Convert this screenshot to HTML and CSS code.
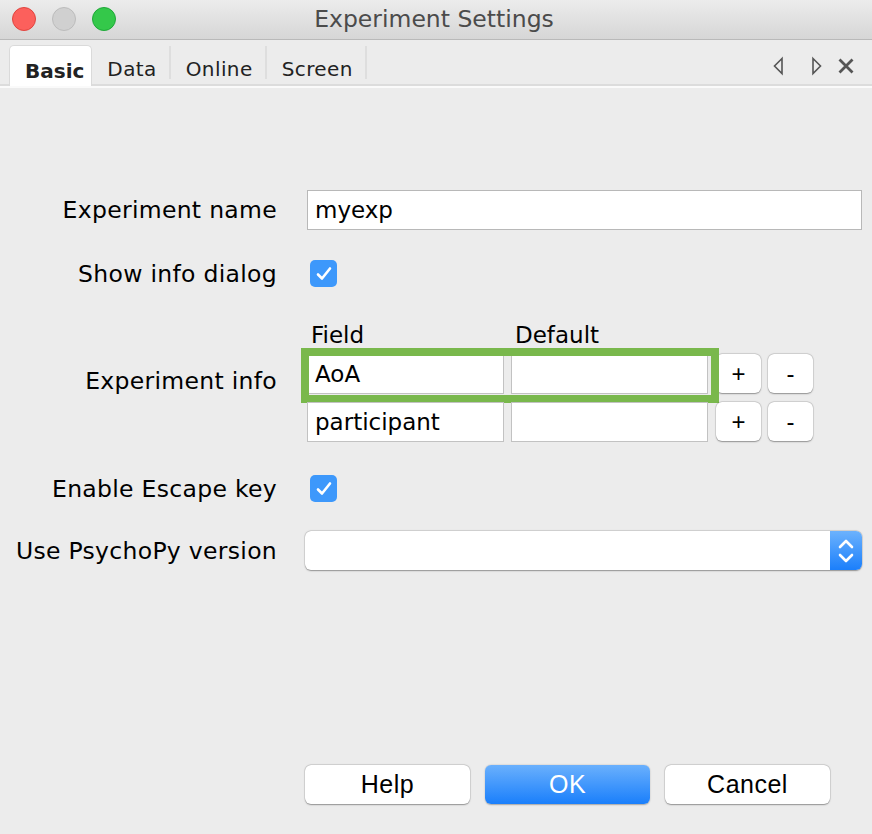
FILE: index.html
```html
<!DOCTYPE html>
<html>
<head>
<meta charset="utf-8">
<link rel="stylesheet" href="styles.css">
</head>
<body>
<div class="window">
  <div class="titlebar">
    <div class="lights">
      <span class="light red"></span>
      <span class="light grey"></span>
      <span class="light green"></span>
    </div>
    <div class="title">Experiment Settings</div>
  </div>
  <div class="tabstrip">
    <div class="tabs">
      <div class="tab active">Basic</div>
      <div class="tab">Data</div>
      <div class="sep"></div>
      <div class="tab">Online</div>
      <div class="sep"></div>
      <div class="tab">Screen</div>
      <div class="sep"></div>
    </div>
    <div class="tabnav">
      <svg class="navicon" width="14" height="20" viewBox="0 0 14 20"><path d="M11 2.5 L3.5 10 L11 17.5 Z" fill="none" stroke="#555" stroke-width="1.6" stroke-linejoin="miter"/></svg>
      <svg class="navicon next" width="14" height="20" viewBox="0 0 14 20"><path d="M3 2.5 L10.5 10 L3 17.5 Z" fill="none" stroke="#555" stroke-width="1.6" stroke-linejoin="miter"/></svg>
      <svg class="navicon close" width="18" height="20" viewBox="0 0 18 20"><path d="M2.5 3.5 L15.5 16.5 M15.5 3.5 L2.5 16.5" stroke="#555" stroke-width="2.8"/></svg>
    </div>
  </div>
  <div class="tabline"></div>

  <div class="form">
    <div class="row row-name">
      <div class="label">Experiment name</div>
      <div class="control"><div class="textfield wide">myexp</div></div>
    </div>
    <div class="row row-showinfo">
      <div class="label">Show info dialog</div>
      <div class="control"><span class="checkbox"><svg width="18" height="16" viewBox="0 0 18 16"><path d="M3 8.5 L7 12.5 L15 2.5" fill="none" stroke="#fff" stroke-width="2.6" stroke-linecap="round" stroke-linejoin="round"/></svg></span></div>
    </div>
    <div class="row row-heads">
      <div class="label"></div>
      <div class="control heads">
        <div class="head">Field</div>
        <div class="head">Default</div>
      </div>
    </div>
    <div class="row row-info">
      <div class="label">Experiment info</div>
      <div class="control info">
        <div class="inforow">
          <div class="cell">AoA</div>
          <div class="cell"></div>
          <div class="btn small">+</div>
          <div class="btn small">-</div>
          <div class="highlight"></div>
        </div>
        <div class="inforow">
          <div class="cell">participant</div>
          <div class="cell"></div>
          <div class="btn small">+</div>
          <div class="btn small">-</div>
        </div>
      </div>
    </div>
    <div class="row row-escape">
      <div class="label">Enable Escape key</div>
      <div class="control"><span class="checkbox"><svg width="18" height="16" viewBox="0 0 18 16"><path d="M3 8.5 L7 12.5 L15 2.5" fill="none" stroke="#fff" stroke-width="2.6" stroke-linecap="round" stroke-linejoin="round"/></svg></span></div>
    </div>
    <div class="row row-version">
      <div class="label">Use PsychoPy version</div>
      <div class="control">
        <div class="select">
          <div class="selval"></div>
          <div class="selarrow"><svg width="20" height="30" viewBox="0 0 20 30"><path d="M4 11 L10 5 L16 11 M4 19 L10 25 L16 19" fill="none" stroke="#fff" stroke-width="2.6" stroke-linecap="round" stroke-linejoin="round"/></svg></div>
        </div>
      </div>
    </div>
  </div>

  <div class="buttons">
    <div class="btn big">Help</div>
    <div class="btn big primary">OK</div>
    <div class="btn big">Cancel</div>
  </div>
</div>
</body>
</html>
```

FILE: styles.css
```css
* { box-sizing: border-box; }
html, body { margin: 0; padding: 0; }
body {
  width: 872px;
  height: 834px;
  background: #ececec;
  font-family: "DejaVu Sans", "Liberation Sans", sans-serif;
  color: #000;
  overflow: hidden;
}
.window { width: 872px; height: 834px; display: flex; flex-direction: column; }

.titlebar {
  height: 40px;
  flex: none;
  background: linear-gradient(#ececec, #d6d6d6);
  border-bottom: 1px solid #b9b9b9;
  position: relative;
  display: flex;
  align-items: center;
}
.lights { display: flex; gap: 16px; padding-left: 12px; margin-top: -2px; }
.light { width: 24px; height: 24px; border-radius: 50%; display: block; }
.red { background: #fc605c; border: 1px solid #e0443e; }
.grey { background: #d0d0d0; border: 1px solid #bcbcbc; }
.green { background: #34c84a; border: 1px solid #1ea838; }
.title {
  position: absolute;
  left: 0; right: 0; top: 0; bottom: 0;
  display: flex; align-items: center; justify-content: center;
  font-size: 23.5px;
  color: #4b4b4b;
  padding-bottom: 2px;
  padding-right: 4px;
}

.tabstrip {
  height: 46px;
  flex: none;
  display: flex;
  justify-content: space-between;
  align-items: flex-end;
  padding-left: 9px;
  padding-right: 17px;
  background: #ececec;
  border-bottom: 2px solid #dcdcdc;
}
.tabs { display: flex; align-items: flex-end; height: 39px; }
.tab {
  height: 39px;
  display: flex; align-items: center;
  padding: 9px 12px 0 15px;
  font-size: 20px;
  letter-spacing: 0.4px;
  color: #222;
}
.tab.active {
  background: #fff;
  font-weight: bold;
  letter-spacing: 0;
  border: 1px solid #dadada;
  border-bottom: none;
  border-radius: 5px 5px 0 0;
  padding: 9px 7px 0 15px;
  margin-bottom: -2px;
  height: 41px;
}
.sep { width: 2px; height: 33px; background: #dedede; margin-bottom: 5px; }
.tabnav { display: flex; align-items: center; height: 39px; gap: 25px; padding-top: 3px; }
.tabnav .close { margin-left: -12px; }
.tabline { height: 3px; flex: none; border-top: 2px solid #fafafa; }

.form { display: flex; flex-direction: column; padding-top: 101px; }
.row { display: flex; align-items: center; }
.label {
  width: 277px;
  flex: none;
  text-align: right;
  font-size: 23.5px;
  letter-spacing: 0.3px;
}
.control { flex: 1; padding-left: 30px; }

.textfield {
  height: 40px;
  background: #fff;
  border: 1px solid #b8b8b8;
  font-size: 23px;
  display: flex; align-items: center;
  padding-left: 7px;
}
.wide { width: 555px; }

.row-showinfo { margin-top: 30px; height: 27px; }
.row-showinfo .control, .row-escape .control { padding-left: 33px; }
.checkbox {
  width: 27px; height: 27px;
  background: #3d98fb;
  border-radius: 5px;
  display: flex; align-items: center; justify-content: center;
}

.row-heads { margin-top: 34px; height: 28px; }
.heads { display: flex; padding-left: 34px; font-size: 23px; }
.head { width: 204px; }

.row-info { margin-top: 5px; align-items: flex-start; }
.row-info .label { padding-top: 13px; }
.info { display: flex; flex-direction: column; gap: 8px; }
.inforow { display: flex; gap: 7px; position: relative; height: 40px; align-items: stretch; }
.cell {
  width: 197px;
  background: #fff;
  border: 1px solid #c2c2c2;
  font-size: 23px;
  display: flex; align-items: center;
  padding-left: 7px;
}
.cell + .cell { margin-right: 1px; }
.btn {
  background: #fff;
  border-radius: 6px;
  box-shadow: 0 0.5px 1.5px rgba(0,0,0,0.35), 0 0 0 0.5px rgba(0,0,0,0.12);
  display: flex; align-items: center; justify-content: center;
  font-size: 22px;
  font-family: "Liberation Sans", sans-serif;
}
.btn.small { width: 45px; height: 39px; font-size: 24px; }
.highlight {
  position: absolute;
  left: -6px; top: -6px;
  width: 418px; height: 55px;
  border: 8px solid #79b84c;
  pointer-events: none;
}

.row-escape { margin-top: 33px; height: 27px; }
.row-version { margin-top: 29px; }
.select {
  width: 557px; height: 39px;
  margin-left: -2px;
  display: flex;
  border-radius: 6px;
  box-shadow: 0 0.5px 1.5px rgba(0,0,0,0.35), 0 0 0 0.5px rgba(0,0,0,0.12);
  overflow: hidden;
  background: #fff;
}
.selval { flex: 1; }
.selarrow {
  width: 32px;
  background: linear-gradient(#6cb2fd, #1b7ffb);
  display: flex; align-items: center; justify-content: center;
}

.buttons {
  margin-top: auto;
  margin-bottom: 30px;
  display: flex;
  gap: 15px;
  padding-left: 305px;
}
.btn.big { width: 165px; height: 39px; font-size: 25px; letter-spacing: 0.5px; }
.btn.primary {
  background: linear-gradient(#6ab0fd, #1a7ffb);
  color: #fff;
  box-shadow: 0 0.5px 1.5px rgba(0,0,0,0.3);
}
```
